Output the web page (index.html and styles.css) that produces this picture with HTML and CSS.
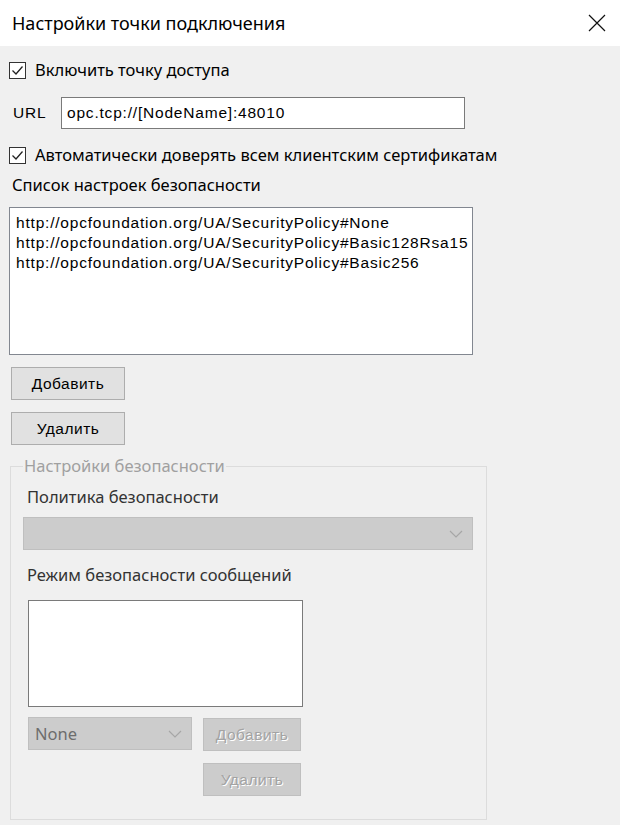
FILE: index.html
```html
<!DOCTYPE html>
<html lang="ru">
<head>
<meta charset="utf-8">
<title>Настройки точки подключения</title>
<link rel="stylesheet" href="styles.css">
</head>
<body>
<div class="dialog">
  <div class="titlebar">
    <span class="title">Настройки точки подключения</span>
    <svg class="close" width="18" height="18" viewBox="0 0 18 18"><path d="M1 1 L17 17 M17 1 L1 17" stroke="#111" stroke-width="1.2" fill="none"/></svg>
  </div>
  <div class="body">
    <div class="check-row first">
      <span class="checkbox"><svg width="15" height="15" viewBox="0 0 15 15"><path d="M2.5 7.5 L6 11 L12.5 3.5" stroke="#222" stroke-width="1.3" fill="none"/></svg></span>
      <span class="ui">Включить точку доступа</span>
    </div>
    <div class="url-row">
      <span class="url-label sans">URL</span>
      <div class="textbox sans">opc.tcp://[NodeName]:48010</div>
    </div>
    <div class="check-row second">
      <span class="checkbox"><svg width="15" height="15" viewBox="0 0 15 15"><path d="M2.5 7.5 L6 11 L12.5 3.5" stroke="#222" stroke-width="1.3" fill="none"/></svg></span>
      <span class="ui">Автоматически доверять всем клиентским сертификатам</span>
    </div>
    <div class="label ui list-label">Список настроек безопасности</div>
    <div class="listbox sans">
      <div>http://opcfoundation.org/UA/SecurityPolicy#None</div>
      <div>http://opcfoundation.org/UA/SecurityPolicy#Basic128Rsa15</div>
      <div>http://opcfoundation.org/UA/SecurityPolicy#Basic256</div>
    </div>
    <div class="btn sans add">Добавить</div>
    <div class="btn sans del">Удалить</div>
    <fieldset class="group">
      <legend class="ui">Настройки безопасности</legend>
      <div class="label ui g-label1">Политика безопасности</div>
      <div class="combo wide">
        <span></span>
        <svg class="chev" width="14" height="8" viewBox="0 0 14 8"><path d="M1 1 L7 7 L13 1" stroke="#a6a6a6" stroke-width="1.2" fill="none"/></svg>
      </div>
      <div class="label ui g-label2">Режим безопасности сообщений</div>
      <div class="msglist"></div>
      <div class="bottom-row">
        <div class="combo small">
          <span class="ui none">None</span>
          <svg class="chev" width="14" height="8" viewBox="0 0 14 8"><path d="M1 1 L7 7 L13 1" stroke="#a6a6a6" stroke-width="1.2" fill="none"/></svg>
        </div>
        <div class="btn sans disabled add2">Добавить</div>
      </div>
      <div class="btn sans disabled del2">Удалить</div>
    </fieldset>
  </div>
</div>
</body>
</html>
```
FILE: styles.css
```css
html, body {
  margin: 0;
  padding: 0;
  background: #f0f0f0;
}
.dialog {
  width: 620px;
  height: 825px;
  background: #f0f0f0;
  overflow: hidden;
  color: #000;
}
.ui {
  font-family: "Noto Sans", "Open Sans", sans-serif;
  font-size: 16.5px;
}
.sans {
  font-family: "Liberation Sans", Arial, sans-serif;
  font-size: 15.5px;
  letter-spacing: 0.8px;
}
.titlebar {
  height: 46px;
  background: #fff;
  display: flex;
  align-items: center;
  justify-content: space-between;
  padding: 0 14px 0 12px;
}
.title {
  font-family: "Noto Sans", "Open Sans", sans-serif;
  font-size: 18px;
  color: #000;
}
.close {
  display: block;
}
.body {
  display: flex;
  flex-direction: column;
  align-items: flex-start;
}
.check-row {
  height: 20px;
  display: flex;
  align-items: center;
  gap: 9px;
  padding-left: 9px;
  line-height: 20px;
}
.check-row.first { margin-top: 14px; }
.check-row.second { margin-top: 16px; }
.checkbox {
  width: 15px;
  height: 15px;
  border: 1px solid #333;
  background: #fff;
  display: flex;
}
.url-row {
  margin-top: 17px;
  height: 32px;
  display: flex;
  align-items: center;
}
.url-label {
  width: 48px;
  padding-left: 13px;
}
.textbox {
  box-sizing: border-box;
  width: 404px;
  height: 32px;
  border: 1px solid #7a7a7a;
  background: #fff;
  padding-left: 5px;
  line-height: 30px;
}
.label {
  height: 20px;
  line-height: 20px;
}
.list-label {
  margin-top: 10px;
  padding-left: 12px;
}
.listbox {
  box-sizing: border-box;
  margin-top: 12px;
  margin-left: 9px;
  width: 464px;
  height: 148px;
  border: 1px solid #828790;
  background: #fff;
  padding: 5px 0 0 6px;
  line-height: 20px;
  letter-spacing: 0.8px;
}
.btn {
  box-sizing: border-box;
  border: 1px solid #adadad;
  background: #e1e1e1;
  display: flex;
  align-items: center;
  justify-content: center;
  height: 33px;
  letter-spacing: 0.5px;
}
.btn.add {
  margin-top: 12px;
  margin-left: 11px;
  width: 114px;
}
.btn.del {
  margin-top: 12px;
  margin-left: 11px;
  width: 114px;
}
.group {
  margin: 11px 0 0 10px;
  width: 477px;
  box-sizing: border-box;
  height: 364px;
  border: 1px solid #dcdcdc;
  padding: 0;
  display: flex;
  flex-direction: column;
  align-items: flex-start;
}
.group legend {
  margin-left: 12px;
  padding: 0 1px;
  line-height: 20px;
  color: #a0a0a0;
}
.g-label1 {
  margin-top: 11px;
  margin-left: 16px;
  color: #333;
}
.combo {
  box-sizing: border-box;
  height: 33px;
  border: 1px solid #bfbfbf;
  background: #cccccc;
  display: flex;
  align-items: center;
  justify-content: space-between;
  padding: 0 9px 0 6px;
}
.combo.wide {
  margin-top: 10px;
  margin-left: 12px;
  width: 450px;
}
.g-label2 {
  margin-top: 15px;
  margin-left: 16px;
  color: #333;
}
.msglist {
  box-sizing: border-box;
  margin-top: 15px;
  margin-left: 17px;
  width: 275px;
  height: 107px;
  border: 1px solid #7a7a7a;
  background: #fff;
}
.bottom-row {
  margin-top: 10px;
  margin-left: 17px;
  display: flex;
  align-items: flex-start;
  gap: 11px;
}
.combo.small {
  width: 164px;
}
.none {
  color: #6d6d6d;
}
.btn.disabled {
  border-color: #bfbfbf;
  background: #cccccc;
  color: #a3a3a3;
  text-shadow: 1px 1px 0 #fff;
  width: 98px;
  height: 33px;
}
.btn.add2 {
  margin-top: 1px;
}
.btn.del2 {
  margin-top: 12px;
  margin-left: 192px;
}
```
